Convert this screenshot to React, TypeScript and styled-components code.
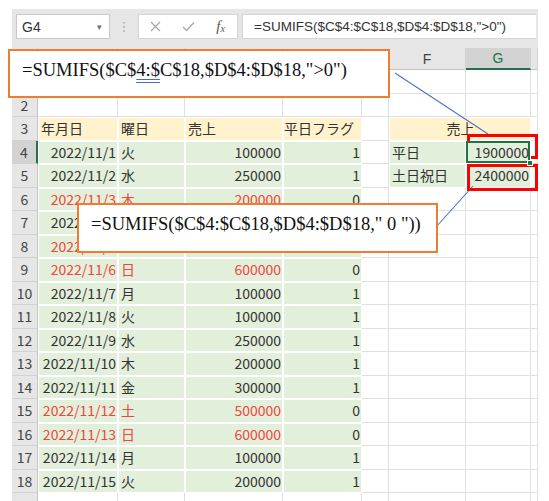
import React from "react";
import styled, { createGlobalStyle } from "styled-components";

type DataRow = {
  date: string;
  day: string;
  sales: string;
  flag: string;
  holiday?: boolean;
};

const dataRows: DataRow[] = [
  { date: "2022/11/1", day: "火", sales: "100000", flag: "1" },
  { date: "2022/11/2", day: "水", sales: "250000", flag: "1" },
  { date: "2022/11/3", day: "木", sales: "200000", flag: "0", holiday: true },
  { date: "2022/11/4", day: "金", sales: "300000", flag: "1" },
  { date: "2022/11/5", day: "土", sales: "500000", flag: "0", holiday: true },
  { date: "2022/11/6", day: "日", sales: "600000", flag: "0", holiday: true },
  { date: "2022/11/7", day: "月", sales: "100000", flag: "1" },
  { date: "2022/11/8", day: "火", sales: "100000", flag: "1" },
  { date: "2022/11/9", day: "水", sales: "250000", flag: "1" },
  { date: "2022/11/10", day: "木", sales: "200000", flag: "1" },
  { date: "2022/11/11", day: "金", sales: "300000", flag: "1" },
  { date: "2022/11/12", day: "土", sales: "500000", flag: "0", holiday: true },
  { date: "2022/11/13", day: "日", sales: "600000", flag: "0", holiday: true },
  { date: "2022/11/14", day: "月", sales: "100000", flag: "1" },
  { date: "2022/11/15", day: "火", sales: "200000", flag: "1" },
];

const columnLetters = ["A", "B", "C", "D", "E", "F", "G", ""];

const App: React.FC = () => {
  return (
    <Frame>
      <GlobalStyle />
      <Toolbar>
        <NameBox>
          <span>G4</span>
          <Caret>▾</Caret>
        </NameBox>
        <Grip>⋮</Grip>
        <IconBox>
          <IconSlot>
            <svg width="11" height="11" viewBox="0 0 11 11">
              <path d="M1 1 L10 10 M10 1 L1 10" stroke="#a9a9a9" strokeWidth="1.2" fill="none" />
            </svg>
          </IconSlot>
          <IconSlot>
            <svg width="13" height="11" viewBox="0 0 13 11">
              <path d="M1 6 L4.5 9.5 L12 1.5" stroke="#a9a9a9" strokeWidth="1.3" fill="none" />
            </svg>
          </IconSlot>
          <IconSlot>
            <Fx>
              f<sub>x</sub>
            </Fx>
          </IconSlot>
        </IconBox>
        <FormulaField>=SUMIFS($C$4:$C$18,$D$4:$D$18,"&gt;0")</FormulaField>
      </Toolbar>

      <Sheet>
        <Corner />
        {columnLetters.map((c) => (
          <ColHead key={c || "H"} $selected={c === "G"}>
            {c}
          </ColHead>
        ))}

        {[1, 2].map((r) => (
          <React.Fragment key={r}>
            <RowHead>{r}</RowHead>
            {columnLetters.map((c) => (
              <Cell key={c || "H"} />
            ))}
          </React.Fragment>
        ))}

        <RowHead>3</RowHead>
        <Cell $fill="head">年月日</Cell>
        <Cell $fill="head">曜日</Cell>
        <Cell $fill="head">売上</Cell>
        <Cell $fill="head" $tight>
          平日フラグ
        </Cell>
        <Cell />
        <Cell $fill="head" $span={2} $align="center">
          売上
        </Cell>
        <Cell />

        {dataRows.map((d, i) => {
          const r = i + 4;
          return (
            <React.Fragment key={r}>
              <RowHead $selected={r === 4}>{r}</RowHead>
              <Cell $fill="data" $align="right" $red={d.holiday}>
                {d.date}
              </Cell>
              <Cell $fill="data" $red={d.holiday}>
                {d.day}
              </Cell>
              <Cell $fill="data" $align="right" $red={d.holiday}>
                {d.sales}
              </Cell>
              <Cell $fill="data" $align="right">
                {d.flag}
              </Cell>
              <Cell />
              {r === 4 && (
                <>
                  <Cell $fill="data">平日</Cell>
                  <Cell $fill="data" $align="right" $selected>
                    1900000
                  </Cell>
                </>
              )}
              {r === 5 && (
                <>
                  <Cell $fill="data">土日祝日</Cell>
                  <Cell $fill="data" $align="right">
                    2400000
                  </Cell>
                </>
              )}
              {r > 5 && (
                <>
                  <Cell />
                  <Cell />
                </>
              )}
              <Cell />
            </React.Fragment>
          );
        })}

        {/* row 19 falls below the window edge; only its top strip shows */}
        <RowHead />
        {columnLetters.map((c) => (
          <Cell key={c || "H"} />
        ))}
      </Sheet>

      <Leaders width="549" height="501" viewBox="0 0 549 501">
        <line x1="395" y1="73" x2="488" y2="134" stroke="#4a74c9" strokeWidth="1.1" />
        <line x1="436" y1="227" x2="473" y2="186" stroke="#4a74c9" strokeWidth="1.1" />
      </Leaders>

      <Callout $left={8} $top={49} $width={382} $height={49}>
        =SUMIFS($C$<Marked>4:$</Marked>C$18,$D$4:$D$18,"&gt;0")
      </Callout>
      <Callout $left={77} $top={203} $width={361} $height={50}>
        =SUMIFS($C$4:$C$18,$D$4:$D$18," 0 "))
      </Callout>

      <RedMark $top={134} />
      <RedMark $top={164} />
    </Frame>
  );
};

const GlobalStyle = createGlobalStyle`
  html, body {
    margin: 0;
    padding: 0;
    background: #ffffff;
  }
  body {
    font-family: "Noto Sans CJK JP", "Liberation Sans", sans-serif;
  }
`;

const Frame = styled.div`
  position: relative;
  width: 549px;
  height: 501px;
  overflow: hidden;
  box-sizing: border-box;
  padding: 9px 11px 0 12px;
  background: #ffffff;
`;

const Toolbar = styled.div`
  display: flex;
  align-items: flex-start;
  height: 39px;
  box-sizing: border-box;
  padding: 5px 2px 0 4px;
  background: #e6e6e6;
`;

const NameBox = styled.div`
  width: 94px;
  height: 25px;
  box-sizing: border-box;
  display: flex;
  align-items: center;
  justify-content: space-between;
  padding: 0 7px 0 5px;
  background: #ffffff;
  border: 1px solid #c9c9c9;
  font-family: "Liberation Sans", sans-serif;
  font-size: 14px;
  color: #333333;
`;

const Caret = styled.span`
  font-size: 9px;
  color: #6e6e6e;
`;

const Grip = styled.div`
  width: 28px;
  height: 25px;
  display: flex;
  align-items: center;
  justify-content: center;
  font-size: 13px;
  color: #a4a4a4;
  font-family: "DejaVu Sans", sans-serif;
`;

const IconBox = styled.div`
  width: 100px;
  height: 25px;
  box-sizing: border-box;
  display: flex;
  background: #ffffff;
  border: 1px solid #d4d4d4;
`;

const IconSlot = styled.div`
  flex: 1;
  display: flex;
  align-items: center;
  justify-content: center;
`;

const Fx = styled.span`
  font-family: "Liberation Serif", serif;
  font-style: italic;
  font-size: 15px;
  color: #555555;
  line-height: 1;

  sub {
    font-size: 10px;
    vertical-align: -1px;
  }
`;

const FormulaField = styled.div`
  flex: 1;
  height: 25px;
  box-sizing: border-box;
  margin-left: 4px;
  display: flex;
  align-items: center;
  padding-left: 11px;
  background: #ffffff;
  border: 1px solid #d4d4d4;
  border-right: none;
  font-family: "Liberation Sans", sans-serif;
  font-size: 13.5px;
  color: #333333;
  white-space: nowrap;
`;

const Sheet = styled.div`
  display: grid;
  grid-template-columns: 26px 80px 67px 98px 79px 27px 77px 65px 7px;
  grid-template-rows: 22px repeat(19, 23.5px);
`;

const Corner = styled.div`
  background: #e6e6e6;
  border-right: 1px solid #cfcfcf;
  border-bottom: 1px solid #c4c4c4;
`;

const ColHead = styled.div<{ $selected?: boolean }>`
  display: flex;
  align-items: center;
  justify-content: center;
  box-sizing: border-box;
  background: ${({ $selected }) => ($selected ? "#d3d3d3" : "#e6e6e6")};
  border-right: 1px solid #d2d2d2;
  border-bottom: ${({ $selected }) =>
    $selected ? "2px solid #217346" : "1px solid #c4c4c4"};
  font-family: "Liberation Sans", sans-serif;
  font-size: 14px;
  color: ${({ $selected }) => ($selected ? "#217346" : "#444444")};
`;

const RowHead = styled.div<{ $selected?: boolean }>`
  display: flex;
  align-items: center;
  justify-content: center;
  box-sizing: border-box;
  background: ${({ $selected }) => ($selected ? "#d3d3d3" : "#e6e6e6")};
  border-right: ${({ $selected }) =>
    $selected ? "2px solid #217346" : "1px solid #c4c4c4"};
  border-bottom: 1px solid #d2d2d2;
  font-size: 14px;
  color: #444444;
`;

const Cell = styled.div<{
  $fill?: "head" | "data";
  $align?: "left" | "right" | "center";
  $red?: boolean;
  $span?: number;
  $selected?: boolean;
  $tight?: boolean;
}>`
  position: relative;
  z-index: ${({ $selected }) => ($selected ? 2 : 0)};
  grid-column: span ${({ $span }) => $span ?? 1};
  display: flex;
  align-items: center;
  justify-content: ${({ $align }) =>
    $align === "right" ? "flex-end" : $align === "center" ? "center" : "flex-start"};
  box-sizing: border-box;
  padding: ${({ $tight }) => ($tight ? "0 0 0 1px" : "0 1px 0 3px")};
  white-space: nowrap;
  font-size: 14px;
  color: ${({ $red }) => ($red ? "#f0463c" : "#333333")};
  background: ${({ $fill }) =>
    $fill === "head" ? "#fff2cc" : $fill === "data" ? "#e2efda" : "#ffffff"};
  border-right: 1px solid ${({ $fill }) => ($fill ? "#ffffff" : "#e0e0e0")};
  border-bottom: 1px solid ${({ $fill }) => ($fill ? "#ffffff" : "#e0e0e0")};
  box-shadow: ${({ $fill, $selected }) =>
    $selected
      ? "inset 0 0 0 2px #217346"
      : $fill
        ? "inset 1px 1px 0 #ffffff"
        : "none"};

  &::after {
    content: "";
    display: ${({ $selected }) => ($selected ? "block" : "none")};
    position: absolute;
    right: -3px;
    bottom: -3px;
    width: 4px;
    height: 4px;
    background: #217346;
    border: 1px solid #ffffff;
  }
`;

const Leaders = styled.svg`
  position: absolute;
  left: 0;
  top: 0;
  pointer-events: none;
`;

const Callout = styled.div<{
  $left: number;
  $top: number;
  $width: number;
  $height: number;
}>`
  position: absolute;
  left: ${({ $left }) => $left}px;
  top: ${({ $top }) => $top}px;
  width: ${({ $width }) => $width}px;
  height: ${({ $height }) => $height}px;
  box-sizing: border-box;
  padding: 8px 0 0 12px;
  background: #ffffff;
  border: 2px solid #ed7d31;
  font-family: "Liberation Serif", serif;
  font-size: 18.5px;
  line-height: 22px;
  color: #111111;
  white-space: nowrap;
`;

const Marked = styled.span`
  text-decoration: underline double #3d6ad6;
  text-underline-offset: 3px;
`;

const RedMark = styled.div<{ $top: number }>`
  position: absolute;
  left: 467px;
  top: ${({ $top }) => $top}px;
  width: 71px;
  height: ${({ $top }) => ($top < 150 ? 25 : 27)}px;
  box-sizing: border-box;
  border: 3px solid #ff0000;
`;

export default App;
